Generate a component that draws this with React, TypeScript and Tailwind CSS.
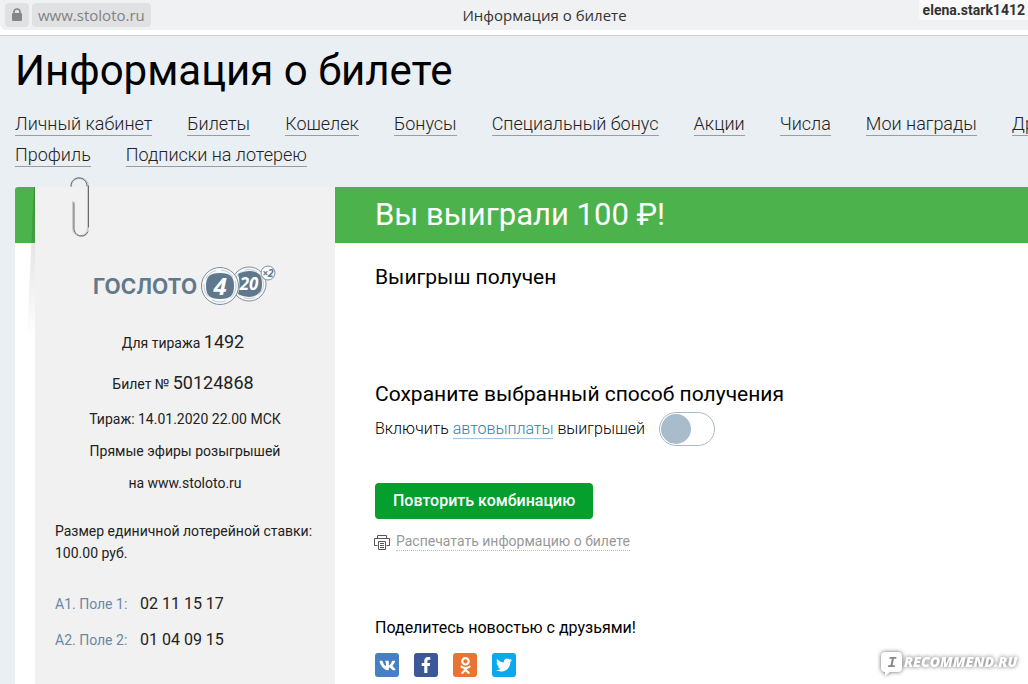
import type { ReactNode } from "react"
import { FaFacebookF, FaOdnoklassniki, FaTwitter, FaVk } from "react-icons/fa"

const menu = [
    ["Личный кабинет", "Билеты", "Кошелек", "Бонусы", "Специальный бонус", "Акции", "Числа", "Мои награды", "Друзья"],
    ["Профиль", "Подписки на лотерею"],
]

const fields = [
    { name: "А1. Поле 1:", numbers: "02 11 15 17" },
    { name: "А2. Поле 2:", numbers: "01 04 09 15" },
]

function AddressBar() {
    return (
        <header className="relative border-b border-[#c9ccd1] bg-white pb-[5px] font-['Open_Sans','Noto_Sans',sans-serif]">
            <div className="flex h-[30px] items-center rounded-bl-md bg-[#f0f1f2] pl-[5px]">
                <div className="flex flex-1 gap-[3px]">
                    <button aria-label="Безопасное соединение" className="flex h-6 w-6 items-center justify-center rounded bg-[#e0e1e2]">
                        <svg width="12" height="14" viewBox="0 0 12 14" aria-hidden="true">
                            <rect x="1" y="5" width="10" height="8" rx="1" fill="#858687" />
                            <path d="M3 6V4a3 3 0 0 1 6 0v2" fill="none" stroke="#858687" strokeWidth="1.6" />
                        </svg>
                    </button>
                    <a href="#" className="h-6 rounded bg-[#e0e1e2] px-[6px] text-[15px] leading-6 text-[#808284]">www.stoloto.ru</a>
                </div>
                <span className="ml-14 text-[15px] text-[#333]">Информация о билете</span>
                <div className="flex-1" />
            </div>
            <span className="absolute top-0 right-0 rounded-bl bg-[#f9f9f9] pr-[3px] pl-1 font-[Roboto,sans-serif] text-[14px] leading-5 font-bold text-[#333]">
                elena.stark1412
            </span>
        </header>
    )
}

function Logo() {
    return (
        <svg width="184" height="42" viewBox="0 0 184 42" role="img" aria-label="Гослото 4 из 20" className="mx-auto">
            <text x="0" y="30" fontFamily="Inter, sans-serif" fontWeight="700" fontSize="21" fill="#62798c">ГОСЛОТО</text>
            <g fill="#f8f9fa" stroke="#7b8e9d">
                <circle cx="156" cy="20" r="17" />
                <circle cx="156" cy="20" r="14.5" stroke="#c3ccd3" strokeDasharray="12 4" />
                <circle cx="127" cy="22" r="18.5" />
                <circle cx="127" cy="22" r="16" stroke="#c3ccd3" strokeDasharray="14 5" />
                <circle cx="175" cy="9" r="7" />
            </g>
            <g fill="#5f788b">
                <path d="M116 12q3-3 11-3 8 0 11 3 3 3 3 10t-3 10q-3 3-11 3-8 0-11-3-3-3-3-10t3-10z" />
                <path d="M145 10q5-3 11-3t10 3q3 3 3 10t-3 9q-4 4-10 4t-11-3q3-10 0-20z" />
            </g>
            <g fontFamily="'Open Sans', sans-serif" fontWeight="700" fontStyle="italic" textAnchor="middle">
                <text x="127" y="31" fontSize="24" fill="#fff">4</text>
                <text x="156" y="26" fontSize="17" fill="#fff">20</text>
                <text x="175" y="13" fontSize="10" fill="#5f788b">×2</text>
            </g>
        </svg>
    )
}

function PaperClip() {
    return (
        <svg width="20" height="62" viewBox="0 0 20 62" aria-hidden="true" className="absolute -top-[10px] left-[35px]">
            <g fill="none" strokeLinecap="round">
                <path d="M1 9C1 4 5 1 9 1s9 3 9 8v41c0 6-3 9-7 9s-8-3-8-8V25" stroke="#cbcbcb" strokeWidth="2" />
                <path d="M1 9C1 4 5 1 9 1s8 3 8 8M18.5 9v41M4 26v25c0 4 3 8 7 8 3 0 5-1 7-4" stroke="#625f5d" strokeWidth="0.9" />
            </g>
        </svg>
    )
}

function Ticket() {
    return (
        <aside className="relative w-[300px] shrink-0 bg-[#f1f1f1] px-5 pt-[77px] text-[14px] text-[#222]">
            <PaperClip />
            <Logo />
            <div className="pr-1 text-center">
                <p className="mt-6 leading-6">Для тиража <span className="text-[18px]">1492</span></p>
                <p className="mt-4 leading-6">Билет № <span className="text-[18px]">50124868</span></p>
            </div>
            <p className="mt-[7px] text-center leading-8">
                Тираж: 14.01.2020 22.00 МСК<br />
                Прямые эфиры розыгрышей<br />
                на www.stoloto.ru
            </p>
            <p className="mt-[21px] leading-[22px] whitespace-nowrap">
                Размер единичной лотерейной ставки:<br />
                100.00 руб.
            </p>
            <dl className="mt-[22px] leading-9">
                {fields.map((field) => (
                    <div key={field.name} className="flex items-baseline">
                        <dt className="w-[85px] text-[#6a88a5]">{field.name}</dt>
                        <dd className="text-[16px]">{field.numbers}</dd>
                    </div>
                ))}
            </dl>
        </aside>
    )
}

function Share({ label, color, children }: { label: string; color: string; children: ReactNode }) {
    return (
        <a href="#" aria-label={label} className={`flex h-6 w-6 items-center justify-center rounded-[3px] text-white ${color}`}>
            {children}
        </a>
    )
}

function Result() {
    return (
        <section className="min-w-0 flex-1 text-black">
            <h2 className="bg-[#4cb34c] pl-10 text-[31px] leading-[56px] text-white">Вы выиграли 100 ₽!</h2>
            <div className="pt-5 pl-10">
                <p className="text-[21px] leading-7">Выигрыш получен</p>
                <h3 className="mt-[89px] text-[21px] leading-7">Сохраните выбранный способ получения</h3>
                <div className="mt-1 flex items-center">
                    <label htmlFor="autopay" className="text-[16px] leading-6 font-light">
                        Включить <a href="#" className="border-b border-[#a3c4dc] text-[#2b80b9]">автовыплаты</a> выигрышей
                    </label>
                    <input
                        id="autopay"
                        type="checkbox"
                        role="switch"
                        className="ml-[14px] h-[34px] w-14 appearance-none rounded-full border border-[#adb8c7] bg-white p-px before:block before:h-[30px] before:w-[30px] before:rounded-full before:bg-[#a9bccb] checked:before:ml-[22px]"
                    />
                </div>
                <button className="mt-[37px] block h-9 rounded bg-[#049f2d] px-[18px] text-[16px] font-medium text-white">
                    Повторить комбинацию
                </button>
                <a href="#" className="mt-[13px] flex w-fit items-center gap-[6px] text-[14px] leading-[22px] text-[#999]">
                    <svg width="16" height="16" viewBox="0 0 16 16" fill="none" stroke="#555" aria-hidden="true" className="-ml-px">
                        <path d="M3.5 4.5v-3h9v3M3.5 11.5h-3v-7h15v7h-3M4.5 7.5h7v8h-7zM6 9.5h4M6 11.5h4M6 13.5h4" />
                    </svg>
                    <span className="border-b border-dotted border-[#bbb] leading-[18px]">Распечатать информацию о билете</span>
                </a>
                <p className="mt-[65px] text-[16px] leading-6">Поделитесь новостью с друзьями!</p>
                <div className="mt-[13px] flex gap-[15px]">
                    <Share label="ВКонтакте" color="bg-[#4680c2]"><FaVk size={17} /></Share>
                    <Share label="Facebook" color="bg-[#3b5998]"><FaFacebookF size={16} /></Share>
                    <Share label="Одноклассники" color="bg-[#e87333]"><FaOdnoklassniki size={17} /></Share>
                    <Share label="Twitter" color="bg-[#08a9ed]"><FaTwitter size={16} /></Share>
                </div>
            </div>
        </section>
    )
}

function Watermark() {
    return (
        <svg width="148" height="34" viewBox="0 0 148 34" role="img" aria-label="irecommend.ru" className="absolute right-[2px] bottom-[2px] drop-shadow-[0_0_2px_#666]">
            <path d="M8 4h12q4 0 4 4v12q0 4-4 4h-8l-5 4v-4q-4 0-4-4V8q0-4 5-4z" fill="#fff" />
            <text x="14" y="19" textAnchor="middle" fontFamily="'Liberation Mono', monospace" fontWeight="700" fontStyle="italic" fontSize="15" fill="#888">I</text>
            <text x="26" y="19" fontFamily="'Open Sans', sans-serif" fontWeight="800" fontStyle="italic" fontSize="14" fill="#fff">RECOMMEND.RU</text>
        </svg>
    )
}

export default function App() {
    return (
        <div className="relative flex min-h-screen flex-col overflow-hidden bg-[#eaeff4] font-[Roboto,sans-serif]">
            <AddressBar />
            <h1 className="pt-[10px] pl-[15px] text-[42px] leading-[50px] text-black">Информация о билете</h1>
            <nav className="mt-3 pl-[15px] text-[18px] leading-[31px] font-light whitespace-nowrap text-[#222]">
                {menu.map((row) => (
                    <ul key={row[0]} className="flex gap-[35px]">
                        {row.map((item) => (
                            <li key={item}><a href="#" className="border-b border-[#999da1] pb-px">{item}</a></li>
                        ))}
                    </ul>
                ))}
            </nav>
            <main className="mt-[17px] ml-[15px] flex flex-1 rounded-tl-[3px] bg-white">
                <div className="relative w-5 shrink-0">
                    <div className="h-14 rounded-tl-[3px] bg-[#4cb34c]" />
                    <svg width="8" height="150" viewBox="0 0 8 150" aria-hidden="true" className="absolute top-0 right-0">
                        <defs>
                            <linearGradient id="fold" x1="0" y1="0" x2="0" y2="1">
                                <stop offset="0" stopOpacity="0.22" />
                                <stop offset="0.4" stopOpacity="0.1" />
                                <stop offset="1" stopOpacity="0" />
                            </linearGradient>
                        </defs>
                        <path d="M7 0h1v150H0z" fill="url(#fold)" />
                    </svg>
                </div>
                <Ticket />
                <Result />
            </main>
            <Watermark />
        </div>
    )
}
